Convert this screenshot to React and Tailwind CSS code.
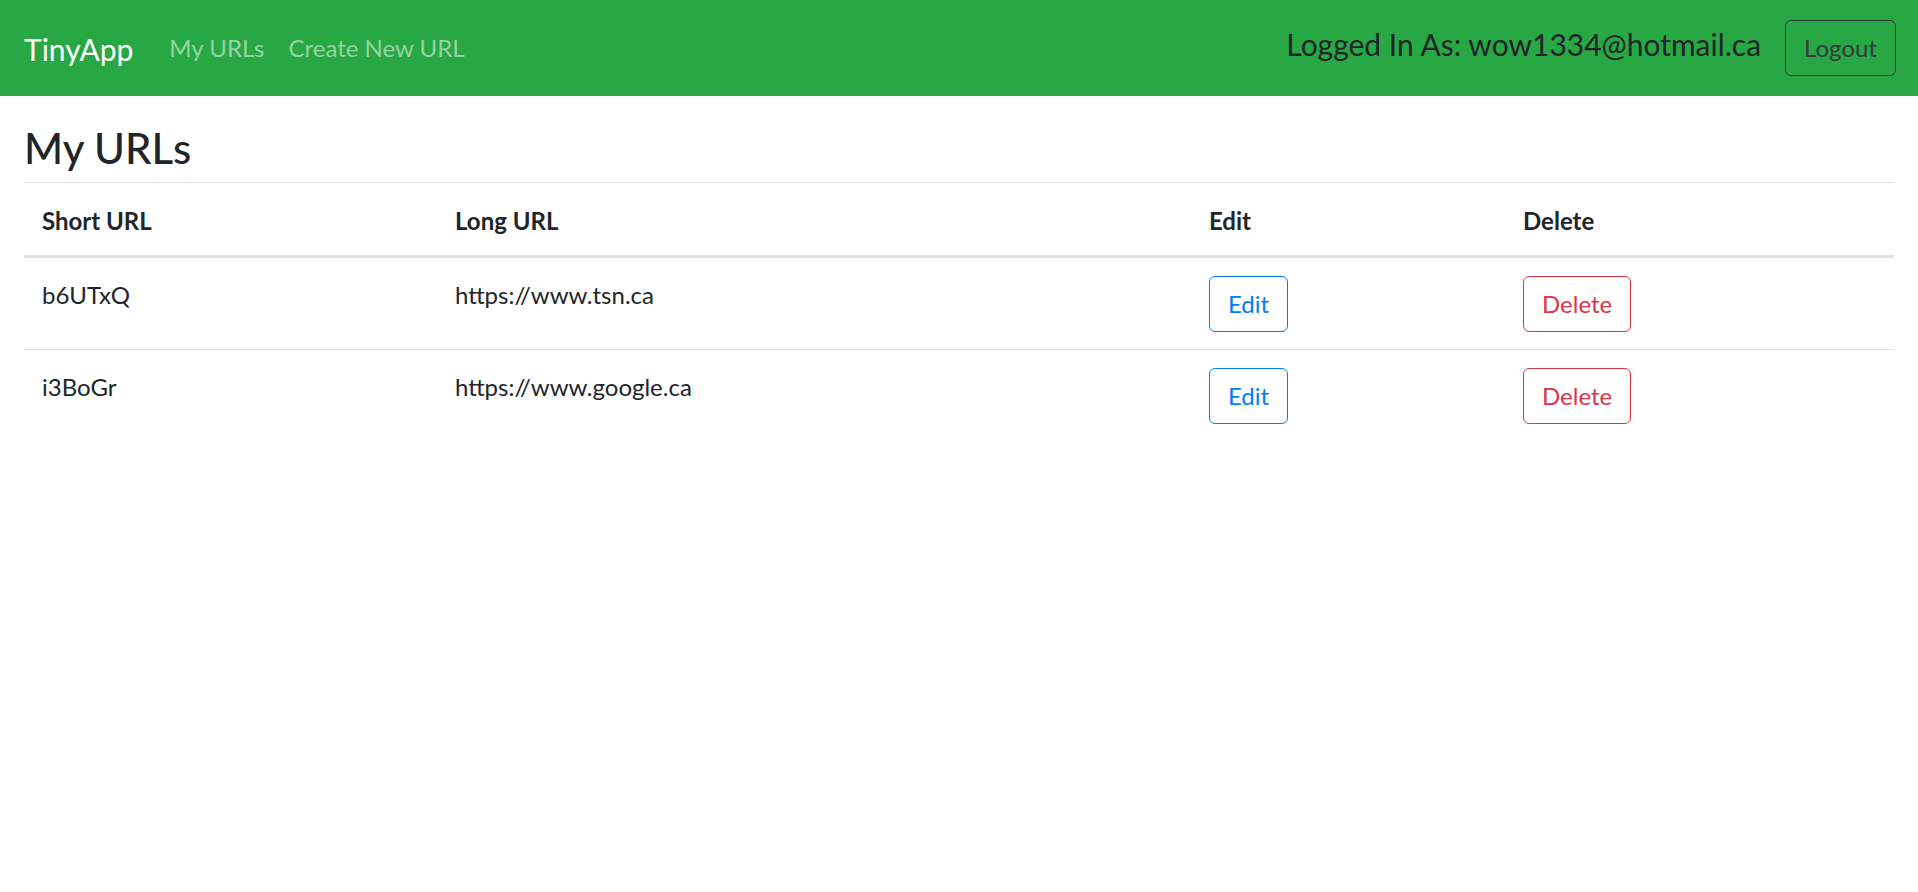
const rows = [
  { short: 'b6UTxQ', long: 'https://www.tsn.ca' },
  { short: 'i3BoGr', long: 'https://www.google.ca' },
]

const th = 'text-left align-bottom px-[18px] pt-[20px] pb-[16px] border-t border-b-[3px] border-[#dee2e6] font-bold'
const td = 'align-top px-[18px] pt-[19px] pb-[17px] border-t border-[#dee2e6]'
const btn = 'h-[56px] px-[18px] border rounded-[6px] bg-transparent'

export default function App() {
  return (
    <div className="min-h-screen bg-white text-[#212529] text-[24px] leading-[36px] font-['Lato',sans-serif]">
      <nav className="h-[96px] bg-[#28a745] pl-[24px] pr-[22px] flex items-center">
        <a href="#" className="text-[30px] text-white mr-[24px] mt-[2px]">TinyApp</a>
        <a href="#" className="px-[12px] text-white/50">My URLs</a>
        <a href="#" className="px-[12px] text-white/50">Create New URL</a>
        <span className="ml-auto text-[30px] leading-[45px] mr-[24px] mb-[8px]">Logged In As: wow1334@hotmail.ca</span>
        <button className={`${btn} border-[#343a40] text-[#343a40]`}>Logout</button>
      </nav>

      <div className="px-[24px]">
        <h3 className="mt-[27px] mb-[9px] text-[42px] leading-[50px] font-medium">My URLs</h3>
        <table className="w-full border-collapse">
          <thead>
            <tr>
              <th className={`${th} w-[413px]`}>Short URL</th>
              <th className={`${th} w-[754px]`}>Long URL</th>
              <th className={`${th} w-[314px]`}>Edit</th>
              <th className={th}>Delete</th>
            </tr>
          </thead>
          <tbody>
            {rows.map(r => (
              <tr key={r.short}>
                <td className={td}>{r.short}</td>
                <td className={td}>{r.long}</td>
                <td className={td}>
                  <button className={`${btn} -mt-px border-[#007bff] text-[#007bff]`}>Edit</button>
                </td>
                <td className={td}>
                  <button className={`${btn} -mt-px border-[#dc3545] text-[#dc3545]`}>Delete</button>
                </td>
              </tr>
            ))}
          </tbody>
        </table>
      </div>
    </div>
  )
}
